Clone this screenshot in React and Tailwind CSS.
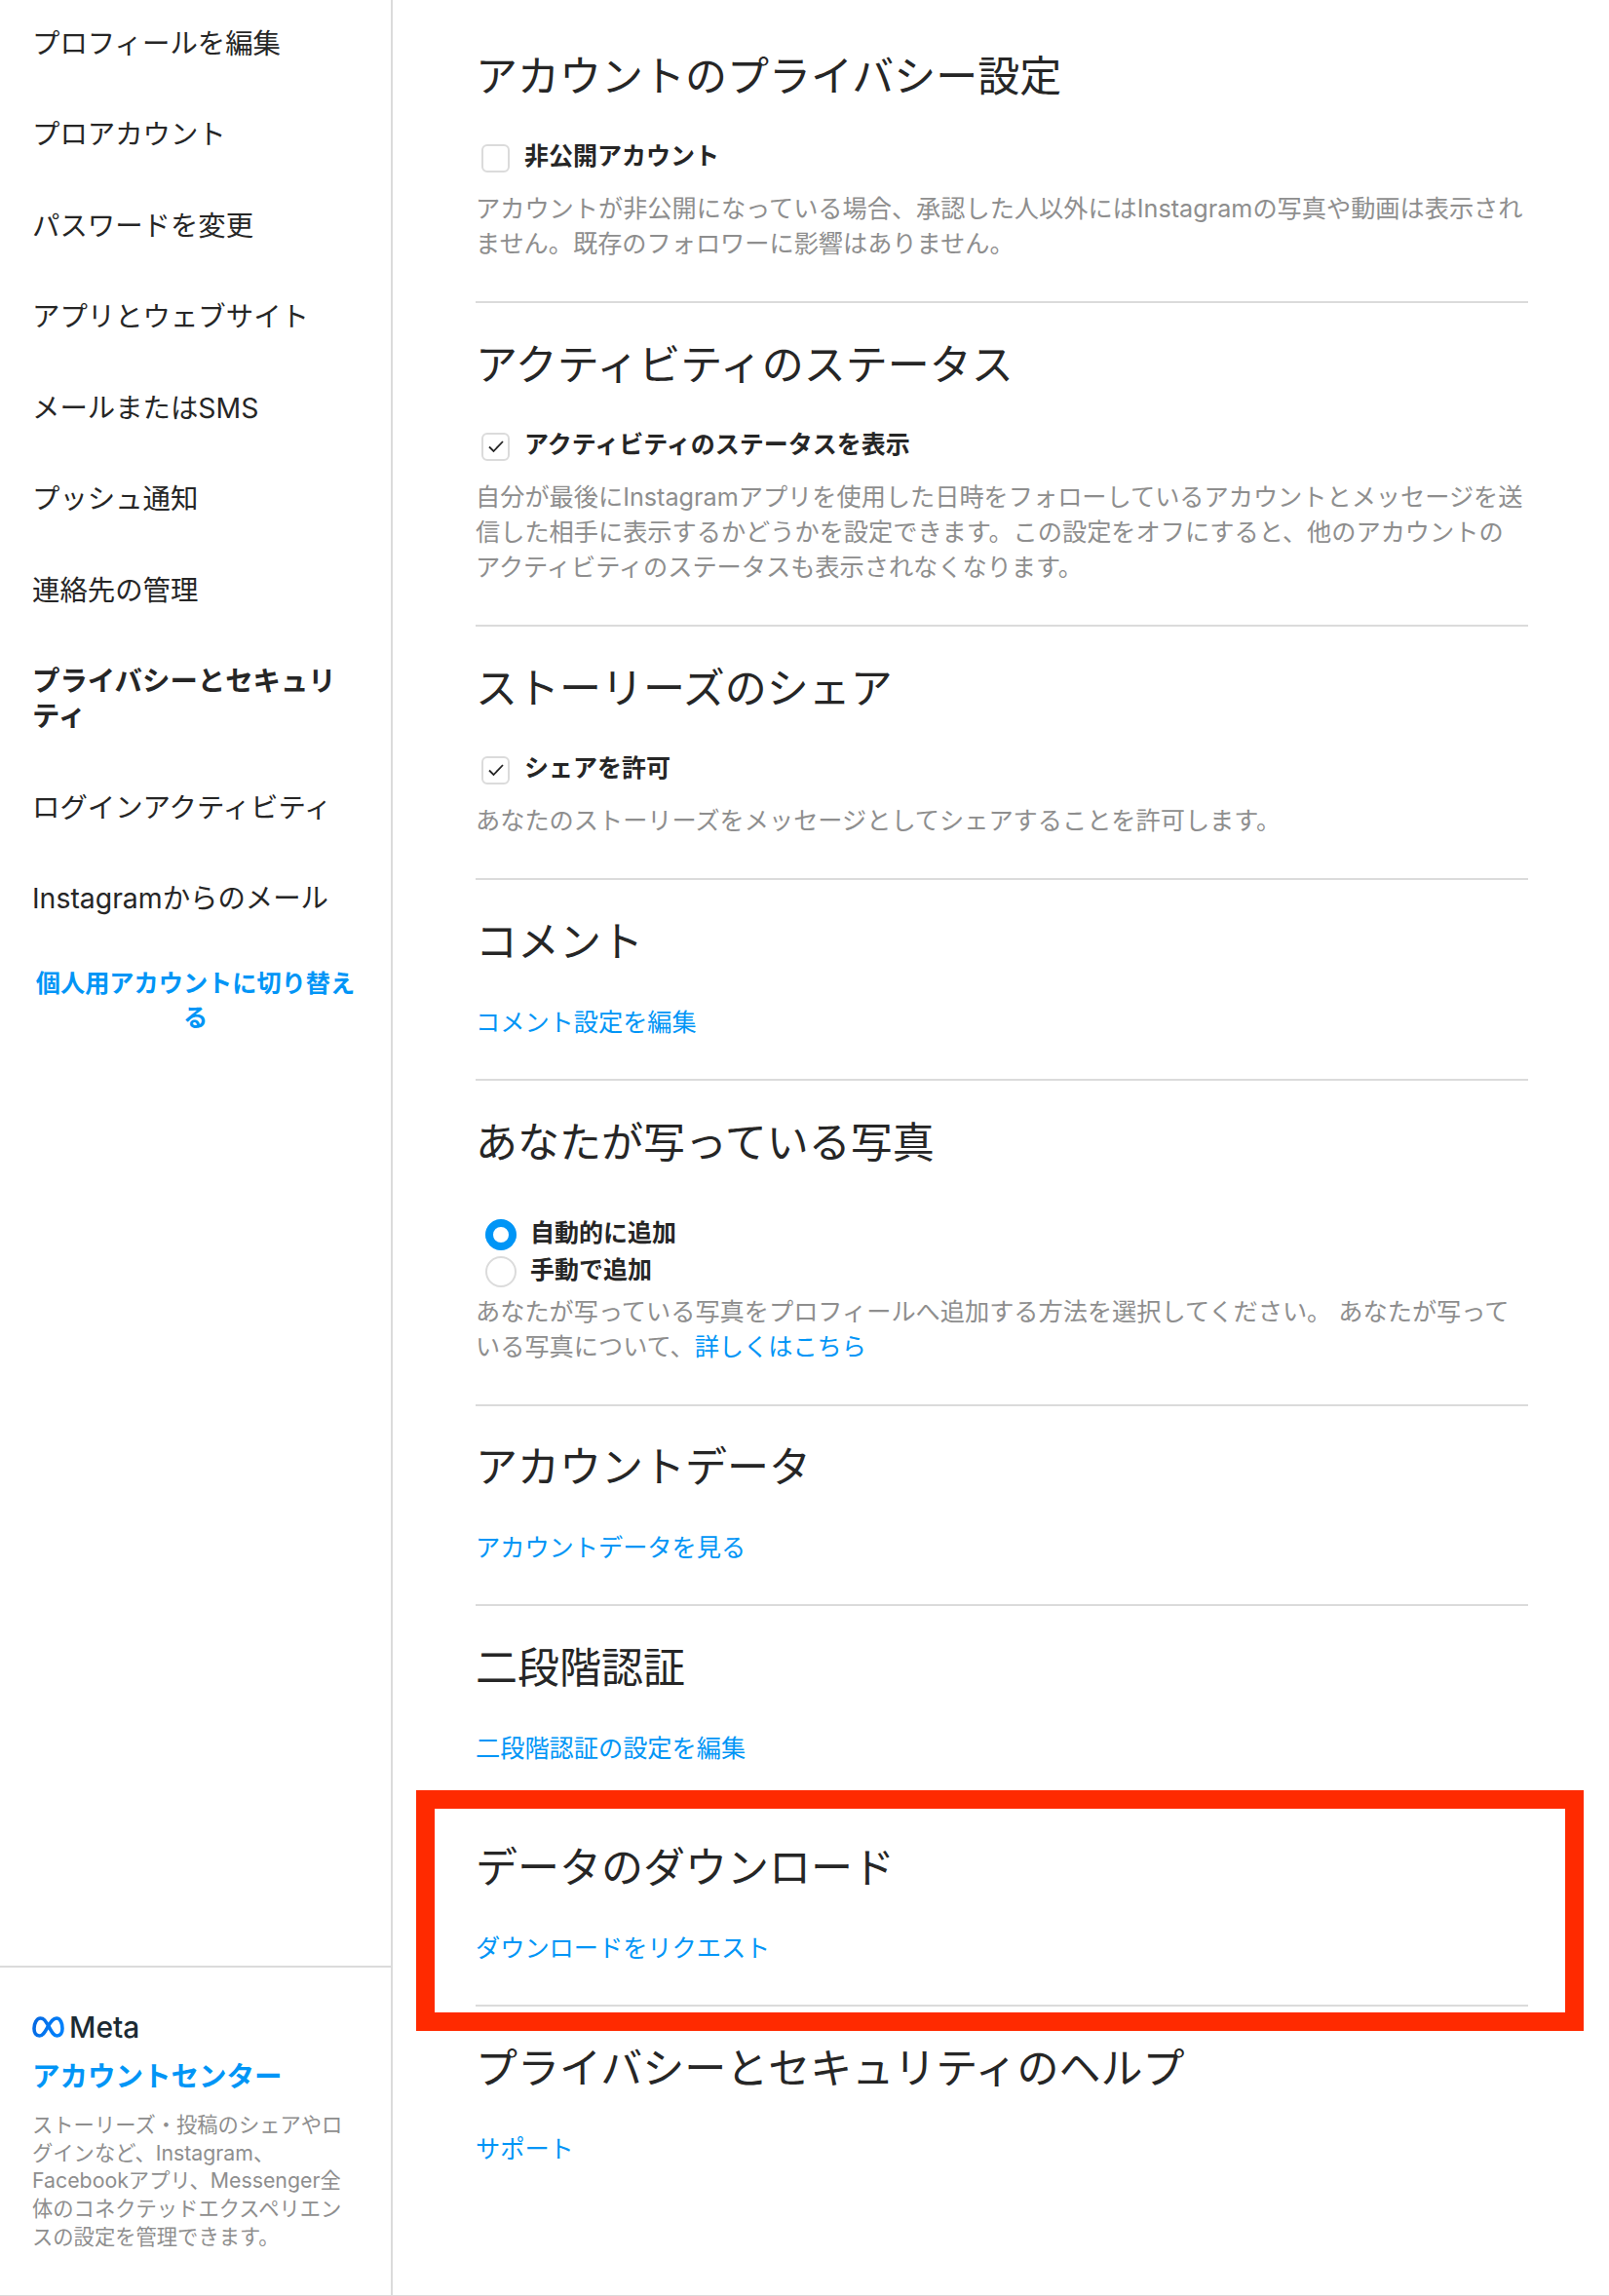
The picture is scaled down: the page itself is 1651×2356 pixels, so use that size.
const navItems = [
    "プロフィールを編集",
    "プロアカウント",
    "パスワードを変更",
    "アプリとウェブサイト",
    "メールまたはSMS",
    "プッシュ通知",
    "連絡先の管理",
]

export default function App() {
    return <div className="relative flex h-[2356px] overflow-hidden border-b border-[#dbdbdb] bg-white font-['Inter','Noto_Sans_CJK_JP',sans-serif] text-[#262626]">
        <Sidebar />

        <main className="flex-1 pl-[85px]">
            <div className="w-[1080px] mt-[15px]">
                <Section title="アカウントのプライバシー設定">
                    <Check label="非公開アカウント" />
                    <Desc>
                        アカウントが非公開になっている場合、承認した人以外にはInstagramの写真や動画は表示され<br />
                        ません。既存のフォロワーに影響はありません。
                    </Desc>
                </Section>

                <Section title="アクティビティのステータス">
                    <Check label="アクティビティのステータスを表示" checked />
                    <Desc>
                        自分が最後にInstagramアプリを使用した日時をフォローしているアカウントとメッセージを送<br />
                        信した相手に表示するかどうかを設定できます。この設定をオフにすると、他のアカウントの<br />
                        アクティビティのステータスも表示されなくなります。
                    </Desc>
                </Section>

                <Section title="ストーリーズのシェア">
                    <Check label="シェアを許可" checked />
                    <Desc>あなたのストーリーズをメッセージとしてシェアすることを許可します。</Desc>
                </Section>

                <LinkSection title="コメント" link="コメント設定を編集" />

                <Section title="あなたが写っている写真">
                    <div className="mt-[47px] flex flex-col">
                        <Radio label="自動的に追加" checked />
                        <Radio label="手動で追加" />
                    </div>
                    <p className="mt-[6px] text-[25.2px] leading-[36px] text-[#8e8e8e]">
                        あなたが写っている写真をプロフィールへ追加する方法を選択してください。 あなたが写って<br />
                        いる写真について、<a className="text-[#0095f6]">詳しくはこちら</a>
                    </p>
                </Section>

                <LinkSection title="アカウントデータ" link="アカウントデータを見る" />
                <LinkSection title="二段階認証" link="二段階認証の設定を編集" />
                <LinkSection title="データのダウンロード" link="ダウンロードをリクエスト" />
                <LinkSection title="プライバシーとセキュリティのヘルプ" link="サポート" last />
            </div>
        </main>

        {/* 赤枠 */}
        <div className="absolute left-[427px] top-[1837px] h-[247px] w-[1198px] border-[19px] border-[#ff2a00]"></div>
    </div>
}

function Sidebar() {
    return <aside className="flex w-[403px] shrink-0 flex-col justify-between border-r-2 border-[#dbdbdb]">
        <nav className="-mt-[2px]">
            {navItems.map((item) => <NavItem key={item}>{item}</NavItem>)}
            <NavItem bold>プライバシーとセキュリ<br />ティ</NavItem>
            <NavItem>ログインアクティビティ</NavItem>
            <NavItem>Instagramからのメール</NavItem>
            <a className="mt-[23px] block px-[34px] text-center text-[25.2px] font-bold leading-[35px] text-[#0095f6]">
                個人用アカウントに切り替え<br />る
            </a>
        </nav>

        <div className="h-[338px] border-t-2 border-[#dbdbdb] px-[33px] pt-[47px]">
            <div className="flex items-center gap-[5px]">
                <MetaLogo />
                <span className="text-[30px] font-medium leading-[28px] text-[#1c2b33]">Meta</span>
            </div>
            <p className="mt-[19px] text-[28.5px] font-bold leading-[36px] text-[#0095f6]">アカウントセンター</p>
            <p className="mt-[17px] text-[21.3px] leading-[28.7px] text-[#8e8e8e]">
                ストーリーズ・投稿のシェアやロ<br />
                グインなど、Instagram、<br />
                Facebookアプリ、Messenger全<br />
                体のコネクテッドエクスペリエン<br />
                スの設定を管理できます。
            </p>
        </div>
    </aside>
}

function NavItem({ bold, children }) {
    return <a className={`block px-[33px] py-[28.75px] text-[28.4px] leading-[36px] ${bold ? "font-bold" : ""}`}>
        {children}
    </a>
}

function MetaLogo() {
    return <svg width="33" height="22" viewBox="0 0 33 22" fill="none">
        <defs>
            <linearGradient id="metaBlue" x1="0" y1="0" x2="1" y2="0.3">
                <stop offset="0" stopColor="#0668e1" />
                <stop offset="1" stopColor="#0080fb" />
            </linearGradient>
        </defs>
        <path
            d="M8.5 2C4.5 2 2 7.5 2 12.5C2 17 4 20 7.5 20C11.5 20 13.5 15 16.5 10C19.5 5 21.5 2 25 2C29 2 31 7.5 31 12.5C31 17 29 20 25.5 20C21.5 20 19.5 14.5 16.5 9.5C13.5 4.5 12 2 8.5 2Z"
            stroke="url(#metaBlue)"
            strokeWidth="3.6"
            strokeLinejoin="round"
        />
    </svg>
}

function Section({ title, children }) {
    return <section className="border-b-2 border-[#dbdbdb] pb-[41px] pt-[36px]">
        <h2 className="text-[43px] font-normal leading-[54px]">{title}</h2>
        {children}
    </section>
}

function LinkSection({ title, link, last }) {
    return <section className={`pb-[40px] pt-[35.5px] ${last ? "" : "border-b-2 border-[#dbdbdb]"}`}>
        <h2 className="text-[43px] font-normal leading-[54px]">{title}</h2>
        <a className="mt-[38px] block text-[25.2px] leading-[36px] text-[#0095f6]">{link}</a>
    </section>
}

function Desc({ children }) {
    return <p className="mt-[18px] text-[25.2px] leading-[36px] text-[#8e8e8e]">{children}</p>
}

function Check({ label, checked }) {
    return <label className="mt-[37px] flex h-[36px] items-center pl-[6px]">
        <span className="mt-[4px] flex h-[29px] w-[29px] items-center justify-center rounded-[6px] border-2 border-[#dbdbdb]">
            {checked && <svg width="18" height="14" viewBox="0 0 18 14" fill="none">
                <path d="M2 7.5L6.5 12L16 2" stroke="#262626" strokeWidth="1.8" />
            </svg>}
        </span>
        <span className="ml-[15px] text-[25px] font-bold leading-[36px]">{label}</span>
    </label>
}

function Radio({ label, checked }) {
    return <label className="flex h-[38px] items-center pl-[10px]">
        <span className={`mt-[4px] h-[32px] w-[32px] rounded-full ${checked ? "border-[8px] border-[#0095f6]" : "border-2 border-[#dbdbdb]"}`}></span>
        <span className="ml-[14px] text-[25px] font-bold leading-[36px]">{label}</span>
    </label>
}
